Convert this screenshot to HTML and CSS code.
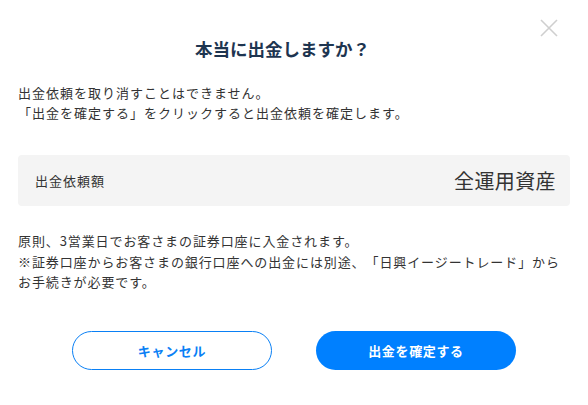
FILE: index.html
```html
<!DOCTYPE html>
<html lang="ja">
<head>
    <meta charset="UTF-8">
    <meta name="viewport" content="width=device-width, initial-scale=1.0">
    <title>出金確認</title>
    <link rel="stylesheet" href="styles.css">
</head>
<body>
    <div class="dialog">
        <button class="close-btn" aria-label="閉じる">
            <svg width="18" height="18" viewBox="0 0 18 18">
                <path d="M1 1 L17 17 M17 1 L1 17" stroke="#cfcfcf" stroke-width="1.6" fill="none"/>
            </svg>
        </button>
        <h1 class="dialog-title">本当に出金しますか？</h1>
        <p class="dialog-text">出金依頼を取り消すことはできません。<br>「出金を確定する」をクリックすると出金依頼を確定します。</p>
        <div class="amount-box">
            <span class="amount-label">出金依頼額</span>
            <span class="amount-value">全運用資産</span>
        </div>
        <p class="dialog-note">原則、3営業日でお客さまの証券口座に入金されます。<br>※証券口座からお客さまの銀行口座への出金には別途、「日興イージートレード」から<br>お手続きが必要です。</p>
        <div class="dialog-actions">
            <button class="btn btn-cancel">キャンセル</button>
            <button class="btn btn-confirm">出金を確定する</button>
        </div>
    </div>
</body>
</html>
```

FILE: styles.css
```css
body {
    margin: 0;
    background-color: #fff;
    font-family: "Noto Sans CJK JP", "Noto Sans", sans-serif;
    color: #333;
    text-spacing-trim: space-all;
}
.dialog {
    position: relative;
    padding: 36px 18px 0 18px;
}
.close-btn {
    position: absolute;
    top: 19px;
    right: 30px;
    width: 18px;
    height: 18px;
    padding: 0;
    border: none;
    background: none;
    cursor: pointer;
}
.close-btn svg {
    display: block;
}
.dialog-title {
    margin: 0;
    padding-right: 23px;
    text-align: center;
    font-size: 17.5px;
    line-height: 26px;
    font-weight: bold;
    color: #1e3550;
}
.dialog-text {
    margin: 21px 0 0 0;
    font-size: 13px;
    line-height: 20px;
    letter-spacing: 1px;
}
.amount-box {
    display: flex;
    justify-content: space-between;
    align-items: center;
    height: 51px;
    margin-top: 32px;
    padding: 0 14px 0 17px;
    background-color: #f4f4f4;
    border-radius: 4px;
}
.amount-label {
    font-size: 13px;
    letter-spacing: 1px;
}
.amount-value {
    font-size: 20px;
    letter-spacing: 0.02em;
}
.dialog-note {
    margin: 25px 0 0 0;
    font-size: 13px;
    line-height: 20.5px;
    letter-spacing: 0.9px;
}
.dialog-actions {
    display: flex;
    justify-content: center;
    gap: 44px;
    margin-top: 38px;
}
.btn {
    width: 200px;
    height: 39px;
    border-radius: 20px;
    font-family: inherit;
    font-size: 13px;
    font-weight: bold;
    letter-spacing: 0.05em;
    cursor: pointer;
}
.btn-cancel {
    background-color: #fff;
    color: #0a80f5;
    border: 1px solid #0a80f5;
}
.btn-confirm {
    background-color: #0080ff;
    color: #fff;
    border: none;
}
```
